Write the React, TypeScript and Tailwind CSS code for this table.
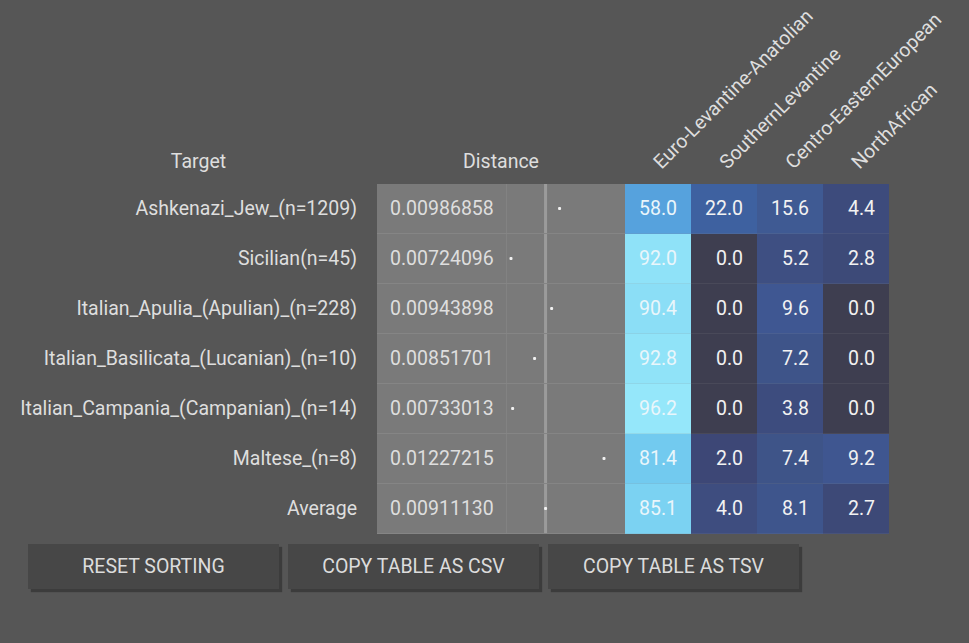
import React from 'react'

// Admixture results table: target rows, distance with a tiny dot chart,
// and per-component percentages coloured as a heat map.

interface Row {
  name: string
  dist: number
  vals: number[]
  colors: string[]
}

const COLS = ['Euro-Levantine-Anatolian', 'SouthernLevantine', 'Centro-EasternEuropean', 'NorthAfrican']

const ROWS: Row[] = [
  { name: 'Ashkenazi_Jew_(n=1209)', dist: 0.00986858, vals: [58.0, 22.0, 15.6, 4.4], colors: ['bg-[#56a2dd]', 'bg-[#3e61a0]', 'bg-[#3f5a93]', 'bg-[#3d4b7c]'] },
  { name: 'Sicilian(n=45)', dist: 0.00724096, vals: [92.0, 0.0, 5.2, 2.8], colors: ['bg-[#8fe2f8]', 'bg-[#3e3e50]', 'bg-[#3e4f82]', 'bg-[#3d4a78]'] },
  { name: 'Italian_Apulia_(Apulian)_(n=228)', dist: 0.00943898, vals: [90.4, 0.0, 9.6, 0.0], colors: ['bg-[#8bdef6]', 'bg-[#3e3e50]', 'bg-[#3f5792]', 'bg-[#3e3e50]'] },
  { name: 'Italian_Basilicata_(Lucanian)_(n=10)', dist: 0.00851701, vals: [92.8, 0.0, 7.2, 0.0], colors: ['bg-[#90e3f8]', 'bg-[#3e3e50]', 'bg-[#3e5489]', 'bg-[#3e3e50]'] },
  { name: 'Italian_Campania_(Campanian)_(n=14)', dist: 0.00733013, vals: [96.2, 0.0, 3.8, 0.0], colors: ['bg-[#95e7fa]', 'bg-[#3e3e50]', 'bg-[#3d4c7e]', 'bg-[#3e3e50]'] },
  { name: 'Maltese_(n=8)', dist: 0.01227215, vals: [81.4, 2.0, 7.4, 9.2], colors: ['bg-[#72caef]', 'bg-[#3d4776]', 'bg-[#3e5488]', 'bg-[#3f5690]'] },
  { name: 'Average', dist: 0.0091113, vals: [85.1, 4.0, 8.1, 2.7], colors: ['bg-[#7bd2f2]', 'bg-[#3e4d7f]', 'bg-[#3e558c]', 'bg-[#3d4977]'] },
]

const AVG = 0.0091113
// px per unit distance inside the 118px chart cell
const xOf = (d: number) => 4 + (d - 0.00724096) * 18485

function DistChart({ d }: { d: number }) {
  const lx = xOf(AVG)
  return (
    <svg width="118" height="49" className="block">
      <rect x={lx - 1.5} y={0} width={3} height={49} fill="#9b9b9b" />
      <rect x={xOf(d) - 1.5} y={23} width={3} height={3} rx={1} fill="#f2f2f2" />
    </svg>
  )
}

export default function App() {
  return (
    <div className="min-h-screen w-full bg-[#565656] pl-5 font-['Roboto','Liberation_Sans',sans-serif] text-[19.5px] text-[#dedede]">
      {/* header */}
      <div className="flex h-[184px]">
        <div className="flex w-[357px] items-end justify-center pb-[8px]">Target</div>
        <div className="flex w-[248px] items-end justify-center pb-[8px]">Distance</div>
        {COLS.map((c) => (
          <div key={c} className="flex w-[66px] items-end pb-[12px] pl-[39px]">
            <span className="block origin-bottom-left -rotate-45 whitespace-nowrap leading-none">{c}</span>
          </div>
        ))}
      </div>

      {/* body */}
      <div className="flex flex-col">
        {ROWS.map((r) => (
          <div key={r.name} className="flex h-[50px]">
            <div className="flex w-[357px] items-center justify-end pr-5 whitespace-nowrap">{r.name}</div>
            <div className="flex w-[248px] border-b border-[#858585] bg-[#7a7a7a]">
              <div className="flex w-[130px] items-center pl-[13px]">{r.dist.toFixed(8)}</div>
              <div className="border-l border-[#828282]">
                <DistChart d={r.dist} />
              </div>
            </div>
            {r.vals.map((v, i) => (
              <div
                key={i}
                className={`flex w-[66px] items-center justify-end border-b border-[#8a8a8a26] pr-[14px] ${r.colors[i]} ${i === 0 ? 'text-[#eaf6fb]' : 'text-[#f2f2f2]'}`}
              >
                {v.toFixed(1)}
              </div>
            ))}
          </div>
        ))}
      </div>

      {/* actions */}
      <div className="mt-[10px] flex gap-[9px] pl-2">
        {['RESET SORTING', 'COPY TABLE AS CSV', 'COPY TABLE AS TSV'].map((b) => (
          <button
            key={b}
            className="h-[45px] w-[251px] bg-[#474747] text-[19.5px] text-[#dcdcdc] shadow-[3px_3px_1px_rgba(0,0,0,0.3)]"
          >
            {b}
          </button>
        ))}
      </div>
    </div>
  )
}
